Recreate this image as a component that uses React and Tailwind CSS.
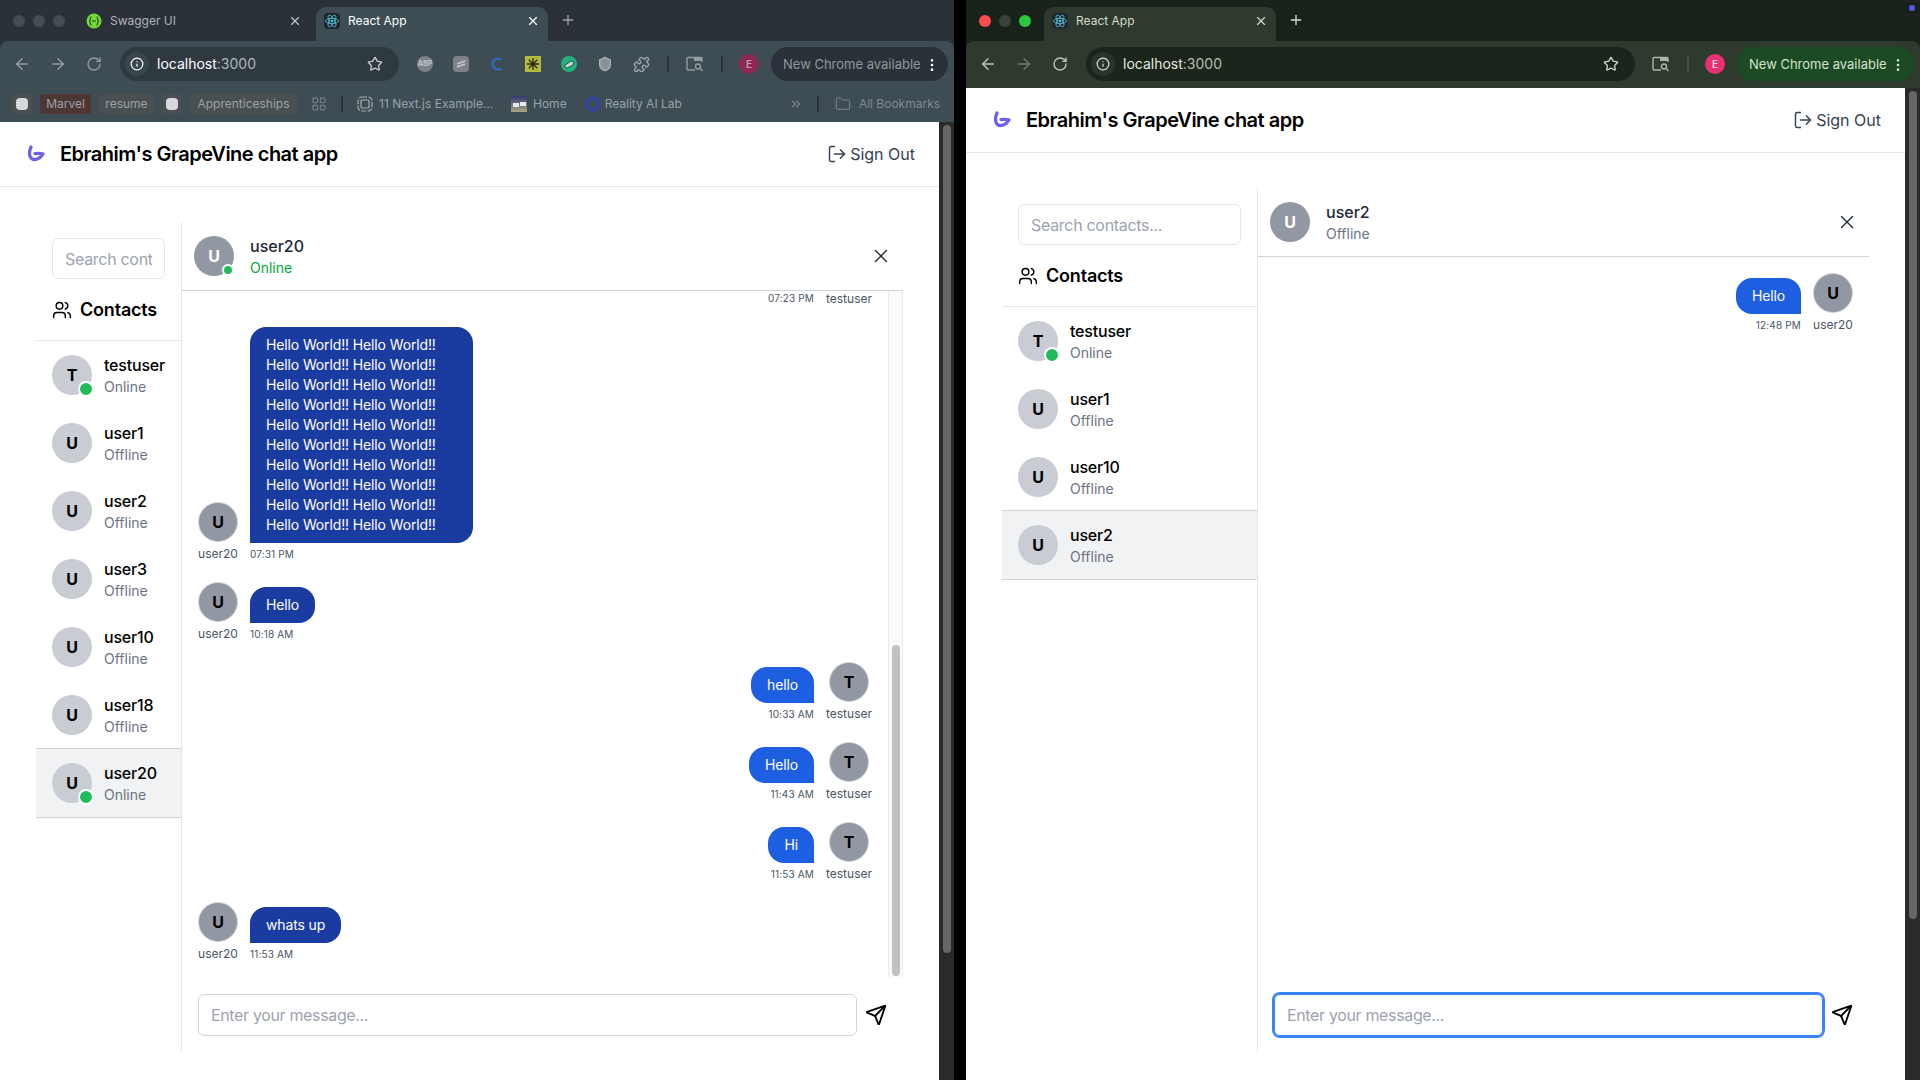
import React from 'react';
import { ArrowLeft, ArrowRight, RotateCw, Info, Star, Puzzle, Shield, Folder, LayoutGrid, EllipsisVertical, X, Plus, ChevronsRight, Users, LogOut, Send } from 'lucide-react';

const leftContacts = [
  { name: 'testuser', initial: 'T', online: true },
  { name: 'user1', initial: 'U' },
  { name: 'user2', initial: 'U' },
  { name: 'user3', initial: 'U' },
  { name: 'user10', initial: 'U' },
  { name: 'user18', initial: 'U' },
  { name: 'user20', initial: 'U', online: true, selected: true },
];

const rightContacts = [
  { name: 'testuser', initial: 'T', online: true },
  { name: 'user1', initial: 'U' },
  { name: 'user10', initial: 'U' },
  { name: 'user2', initial: 'U', selected: true },
];

// first row is scrolled off, only its footer still shows
const leftMessages = [
  { mine: true, who: 'testuser', time: '07:23 PM', footerOnly: true },
  { who: 'user20', text: 'Hello World!! '.repeat(20).trim(), time: '07:31 PM', wide: true },
  { who: 'user20', text: 'Hello', time: '10:18 AM' },
  { mine: true, who: 'testuser', text: 'hello', time: '10:33 AM' },
  { mine: true, who: 'testuser', text: 'Hello', time: '11:43 AM' },
  { mine: true, who: 'testuser', text: 'Hi', time: '11:53 AM' },
  { who: 'user20', text: 'whats up', time: '11:53 AM' },
];

const rightMessages = [
  { mine: true, who: 'user20', text: 'Hello', time: '12:48 PM' },
];

function ReactIcon() {
  return (
    <svg width="16" height="16" viewBox="0 0 16 16" className="shrink-0 rounded-sm bg-[#20262b]">
      <g fill="none" stroke="#58c4dc" strokeWidth="0.8">
        <ellipse cx="8" cy="8" rx="6.5" ry="2.6" />
        <ellipse cx="8" cy="8" rx="6.5" ry="2.6" transform="rotate(60 8 8)" />
        <ellipse cx="8" cy="8" rx="6.5" ry="2.6" transform="rotate(120 8 8)" />
      </g>
      <circle cx="8" cy="8" r="1.3" fill="#58c4dc" />
    </svg>
  );
}

function SwaggerIcon() {
  return (
    <svg width="16" height="16" viewBox="0 0 16 16" className="shrink-0">
      <circle cx="8" cy="8" r="7.5" fill="#6fdc36" />
      <path d="M5.5 3.8C4 3.8 4.6 6.8 3.6 8c1 1.200.4 4.200 1.900 4.200M10.500 3.800C12 3.800 11.400 6.800 12.400 8c-1 1.200-.4 4.200-1.900 4.200M6 8h4" fill="none" stroke="#2a3a20" strokeWidth="1.100" />
    </svg>
  );
}

function WindowSearchIcon({ color }) {
  return (
    <svg width="18" height="16" viewBox="0 0 18 16" fill="none" stroke={color} strokeWidth="1.400">
      <path d="M9 14H2a1 1 0 0 1-1-1V2.500a1 1 0 0 1 1-1h13a1 1 0 0 1 1 1V6" />
      <path d="M8 1.500h8V5H8z" fill={color} stroke="none" />
      <circle cx="12" cy="10.500" r="2.500" />
      <path d="m14 12.500 2.500 2.500" />
    </svg>
  );
}

function Logo() {
  return (
    <svg width="19" height="19" viewBox="0 0 19 19" fill="none" className="shrink-0">
      <path d="M4 2C2.500 5.500 1.800 9 3.300 12c2 3.800 8.700 3.800 12.700-3.200-2.800-.6-5-.7-8-.2" stroke="#6c5ff0" strokeWidth="3.200" strokeLinecap="round" strokeLinejoin="round" />
    </svg>
  );
}

function Extensions() {
  return (
    <>
      <Slot>
        <span className="flex size-4 items-center justify-center rounded-full bg-[#7c8388] text-[7px] font-bold text-[#c4c8ca]">ABP</span>
      </Slot>
      <Slot>
        <svg width="16" height="16" viewBox="0 0 16 16" className="rounded-sm bg-[#7c8388]">
          <path d="M4 8l8-3M4 11l8-3" stroke="#c4c8ca" strokeWidth="1.800" />
        </svg>
      </Slot>
      <Slot>
        <svg width="16" height="16" viewBox="0 0 16 16" fill="none">
          <path d="M12.500 3.500A5.500 5.500 0 1 0 12.500 12.500" stroke="#2f6bc0" strokeWidth="2.200" />
        </svg>
      </Slot>
      <Slot>
        <svg width="16" height="16" viewBox="0 0 16 16" className="bg-[#b4ba3c]">
          <path d="M8 2v12M2 8h12M3.800 3.800l8.400 8.400M12.200 3.800l-8.400 8.400" stroke="#2a2c18" strokeWidth="1.300" />
        </svg>
      </Slot>
      <Slot>
        <svg width="16" height="16" viewBox="0 0 16 16">
          <circle cx="8" cy="8" r="8" fill="#22b07d" />
          <path d="M3 10l7-5 3 1-1 3-6 3z" fill="#c9d6d2" stroke="#1d3a30" strokeWidth="0.800" />
        </svg>
      </Slot>
      <Slot><Shield size={16} className="fill-[#8a9195] text-[#aab0b3]" /></Slot>
      <Slot><Puzzle size={17} className="text-[#9aa3a8]" /></Slot>
      <Separator color="bg-[#2a343a]" />
    </>
  );
}

function Slot({ children }) {
  return <div className="flex w-9 shrink-0 items-center justify-center">{children}</div>;
}

function Separator({ color }) {
  return (
    <div className="flex w-[18px] shrink-0 justify-center">
      <div className={`h-4 w-0.5 ${color}`}></div>
    </div>
  );
}

function LeftTabs() {
  return (
    <>
      <div className="flex h-[34px] w-[232px] shrink-0 items-center pb-1.5 pl-2 text-xs text-[#aeb4b8]">
        <SwaggerIcon />
        <span className="ml-2 flex-1">Swagger UI</span>
        <X size={14} className="mr-2 text-[#c0c4c7]" />
      </div>
      <div className="ml-1.5 flex h-[34px] w-[232px] shrink-0 items-center rounded-t-[10px] bg-[#3e4c54] pb-1.5 pl-2 text-xs text-white">
        <ReactIcon />
        <span className="ml-2 flex-1">React App</span>
        <X size={14} className="mr-2 text-white" />
      </div>
      <Plus size={16} className="mb-[13px] ml-3 text-[#9aa3a8]" />
    </>
  );
}

function RightTabs() {
  return (
    <>
      <div className="flex h-[34px] w-[232px] shrink-0 items-center rounded-t-[10px] bg-[#2f3a2f] pb-1.5 pl-2 text-xs text-[#d3dacd]">
        <ReactIcon />
        <span className="ml-2 flex-1">React App</span>
        <X size={14} className="mr-2 text-[#d3dacd]" />
      </div>
      <Plus size={16} className="mb-[13px] ml-3 text-[#d3dacd]" />
    </>
  );
}

function Bookmarks() {
  return (
    <div className="flex h-[34px] items-start bg-[#3e4c54] pl-3 pt-1.5 text-xs text-[#98a3a9]">
      <div className="flex size-5 items-center justify-center rounded bg-[#4a4f52]"><div className="size-3 rounded-sm bg-[#d6d8da]"></div></div>
      <div className="ml-2 flex h-5 w-[51px] items-center justify-center rounded bg-[#503535]">Marvel</div>
      <div className="ml-2 flex h-5 w-[55px] items-center justify-center rounded bg-[#4a4f52]">resume</div>
      <div className="ml-2 flex size-5 items-center justify-center rounded bg-[#4a4f52]"><div className="size-3 rounded-sm bg-[#d6d8da]"></div></div>
      <div className="ml-2 flex h-5 w-[107px] items-center justify-center rounded bg-[#4a4f52]">Apprenticeships</div>
      <LayoutGrid size={16} strokeWidth={1.500} className="ml-3.5 mt-0.5 text-[#7f8a90]" />
      <div className="ml-3.5 mt-0.5 h-4 w-0.5 bg-[#2a343a]"></div>
      <svg width="16" height="16" viewBox="0 0 16 16" fill="none" stroke="#a8b0b4" strokeWidth="1.200" className="ml-3.5 mt-0.5 shrink-0">
        <rect x="1" y="1" width="14" height="14" rx="4" strokeDasharray="5 1.500" />
        <rect x="4" y="4" width="8" height="8" rx="1" />
      </svg>
      <span className="ml-1.5 mt-0.5 w-[114px] whitespace-nowrap">11 Next.js Example...</span>
      <div className="ml-[18px] mt-0.5 flex size-4 items-center justify-center gap-px bg-gradient-to-b from-[#34386e] to-[#a9a77e]">
        <div className="mt-0.5 h-1 w-1.5 bg-[#e7e8ee]"></div>
        <div className="h-1 w-1.5 bg-[#e7e8ee]"></div>
      </div>
      <span className="ml-1.5 mt-0.5">Home</span>
      <svg width="16" height="16" viewBox="0 0 16 16" fill="none" stroke="#3040b8" strokeWidth="2.500" className="ml-[18px] mt-0.5 shrink-0">
        <path d="M8 1.500l5.500 3v7L8 14.500l-5.500-3v-7z" />
      </svg>
      <span className="ml-1 mt-0.5 whitespace-nowrap">Reality AI Lab</span>
      <ChevronsRight size={14} className="ml-[107px] mt-[3px] text-[#7f8a90]" />
      <div className="ml-3.5 mt-0.5 h-4 w-0.5 bg-[#2a343a]"></div>
      <Folder size={16} strokeWidth={1.400} className="ml-4 mt-0.5 text-[#7f8a90]" />
      <span className="ml-2 mt-0.5 whitespace-nowrap text-[#7f8a90]">All Bookmarks</span>
    </div>
  );
}

function ChromeBar({ focused }) {
  const light = focused ? 'size-3 rounded-full bg-[#3a423b]' : 'size-3 rounded-full bg-[#454d55]';
  const icon = focused ? 'text-[#bcc8b6]' : 'text-[#929ca1]';
  const faded = focused ? 'text-[#6e7a6a]' : 'text-[#929ca1]';
  return (
    <div className={`shrink-0 ${focused ? 'bg-[#18211a]' : 'bg-[#2a3138]'}`}>
      <div className="flex h-[41px] items-end">
        <div className="flex h-full w-[78px] shrink-0 items-center gap-2 pl-[13px]">
          <div className={focused ? 'size-3 rounded-full bg-[#fb4f4f]' : light}></div>
          <div className={light}></div>
          <div className={focused ? 'size-3 rounded-full bg-[#28c840]' : light}></div>
        </div>
        {focused ? <RightTabs /> : <LeftTabs />}
      </div>
      <div className={`flex h-[47px] items-center rounded-t-lg pb-px pl-1 ${focused ? 'bg-[#2f3a2f]' : 'bg-[#3e4c54]'}`}>
        <Slot><ArrowLeft size={18} className={icon} /></Slot>
        <Slot><ArrowRight size={18} className={faded} /></Slot>
        <Slot><RotateCw size={16} className={icon} /></Slot>
        <div className={`ml-2 flex h-[34px] items-center rounded-full pl-[5px] pr-4 ${focused ? 'w-[549px] bg-[#1c251b]' : 'w-[279px] bg-[#2f3a40]'}`}>
          <div className={`flex size-6 shrink-0 items-center justify-center rounded-full ${focused ? 'bg-[#2a342a]' : 'bg-[#3a464d]'}`}>
            <Info size={14} className={focused ? 'text-[#dfe5da]' : 'text-white'} />
          </div>
          <span className={`ml-2 flex-1 text-sm ${focused ? 'text-[#e4e9e0]' : 'text-white'}`}>
            localhost<span className={focused ? 'text-[#b3bdad]' : 'text-[#aeb6ba]'}>:3000</span>
          </span>
          <Star size={16} className={focused ? 'text-[#cdd5c8]' : 'text-[#c4c9cc]'} />
        </div>
        <div className="ml-2 flex items-center">
          {!focused && <Extensions />}
          <Slot><WindowSearchIcon color={focused ? '#a9b8a2' : '#929ca1'} /></Slot>
          <Separator color={focused ? 'bg-[#445243]' : 'bg-[#2a343a]'} />
          <Slot>
            <div className={`flex size-5 items-center justify-center rounded-full text-[10px] font-semibold ${focused ? 'bg-[#e9316f] text-[#ffd9e6]' : 'bg-[#8d2a54] text-[#c9a0b2]'}`}>E</div>
          </Slot>
        </div>
        <div className={`ml-1 flex h-[34px] w-[177px] shrink-0 items-center rounded-full pl-3 pt-px text-[13px] ${focused ? 'bg-[#1c4a22] text-[#d3e3cd]' : 'bg-[#2a3138] text-[#8f989d]'}`}>
          <span className="flex-1 whitespace-nowrap">New Chrome available</span>
          <EllipsisVertical size={16} className={`mr-2 shrink-0 ${focused ? 'text-[#d3e3cd]' : 'text-white'}`} />
        </div>
      </div>
      {!focused && <Bookmarks />}
    </div>
  );
}

function ContactAvatar({ contact }) {
  return (
    <div className="relative flex size-10 shrink-0 items-center justify-center rounded-full bg-[#c9ccd3] font-bold text-black">
      {contact.initial}
      {contact.online && (
        <span className="absolute -bottom-0.5 -right-0.5 box-content size-3 rounded-full border-2 border-white bg-[#22bb5c]"></span>
      )}
    </div>
  );
}

function Sidebar({ contacts, width }) {
  return (
    <aside className={`flex shrink-0 flex-col border-r border-[#e5e7eb] ${width}`}>
      <div className="border-b border-[#e5e7eb] p-4">
        <input readOnly placeholder="Search contacts..." className="h-[41px] w-full min-w-0 rounded-md border border-[#e5e7eb] px-3 text-base tracking-[-0.3px] outline-none placeholder:text-[#9ca3af]" />
        <div className="mt-[17px] flex h-7 items-center gap-2">
          <Users size={20} strokeWidth={1.750} className="shrink-0 text-black" />
          <span className="text-lg font-semibold tracking-[-0.2px] text-black">Contacts</span>
        </div>
      </div>
      {contacts.map((contact) => (
        <div key={contact.name} className={`flex items-center gap-3 px-4 py-3 ${contact.selected ? 'bg-[#f1f2f4] shadow-[0_1px_0_#d1d5db,0_-1px_0_#d1d5db]' : ''}`}>
          <ContactAvatar contact={contact} />
          <div className="min-w-0">
            <div className="font-medium tracking-[-0.2px] whitespace-nowrap text-black">{contact.name}</div>
            <div className="text-sm text-gray-500">{contact.online ? 'Online' : 'Offline'}</div>
          </div>
        </div>
      ))}
    </aside>
  );
}

function Message({ message }) {
  if (message.footerOnly) {
    return (
      <div className="flex shrink-0 justify-end gap-3 leading-[14px] text-gray-600">
        <div className="text-[10px] tracking-[0.15px]">{message.time}</div>
        <div className="text-xs">{message.who}</div>
      </div>
    );
  }
  const avatar = (
    <div className="flex shrink-0 flex-col items-center">
      <div className="flex size-10 items-center justify-center rounded-full border border-[#d1d5db] bg-[#9198a3] font-bold text-black">
        {message.mine && message.who === 'testuser' ? 'T' : 'U'}
      </div>
      <div className="mt-1 text-xs leading-4 whitespace-nowrap text-gray-600">{message.who}</div>
    </div>
  );
  const bubble = (
    <div className={`flex flex-col ${message.mine ? 'items-end' : 'items-start'}`}>
      <div className={`rounded-2xl px-4 py-2 text-sm tracking-[-0.13px] text-white ${message.mine ? 'rounded-br-none bg-[#1d5fe0]' : 'rounded-bl-none bg-[#1a3b9f]'} ${message.wide ? 'w-[223px]' : ''}`}>
        {message.text}
      </div>
      <div className="mt-[3px] text-[10px] leading-4 tracking-[0.15px] text-gray-600">{message.time}</div>
    </div>
  );
  return (
    <div className={`flex shrink-0 items-end gap-3 ${message.mine ? 'justify-end' : 'justify-start'}`}>
      {message.mine ? bubble : avatar}
      {message.mine ? avatar : bubble}
    </div>
  );
}

function ChatPanel({ peer, online, messages, scrolled, focusedInput }) {
  return (
    <section className="flex min-w-0 flex-1 flex-col">
      <div className="flex items-center gap-4 border-b border-[#d1d5db] px-3 py-3">
        <div className="relative flex size-10 shrink-0 items-center justify-center rounded-full bg-[#9198a3] font-bold text-white">
          U
          {online && <span className="absolute bottom-0 right-0 box-content size-2 rounded-full border-2 border-white bg-[#22bb5c]"></span>}
        </div>
        <div className="flex-1">
          <div className="font-medium text-gray-800">{peer}</div>
          <div className={`text-sm ${online ? 'text-green-600' : 'text-gray-500'}`}>{online ? 'Online' : 'Offline'}</div>
        </div>
        <X size={22} strokeWidth={1.500} className="-mr-px text-gray-800" />
      </div>
      <div className="flex min-h-0 flex-1">
        <div className={`flex min-w-0 flex-1 flex-col gap-5 overflow-hidden pl-4 pr-4 ${scrolled ? 'justify-end pb-4' : 'justify-start pt-4'}`}>
          {messages.map((message, index) => (
            <Message key={index} message={message} />
          ))}
        </div>
        {scrolled && (
          <div className="flex w-[15px] shrink-0 flex-col items-center justify-end border-x border-[#ececec] bg-[#fafafa] pb-0.5">
            <div className="h-[331px] w-2 rounded-full bg-[#c1c1c1]"></div>
          </div>
        )}
      </div>
      <div className="flex items-center gap-2 p-4">
        <input
          readOnly
          placeholder="Enter your message..."
          className={`h-[42px] min-w-0 flex-1 rounded-md px-3 text-base tracking-[-0.35px] outline-none placeholder:text-[#9ca3af] ${focusedInput ? 'border border-[#3b82f6] ring-2 ring-[#3b82f6]' : 'border border-[#d1d5db]'}`}
        />
        <Send size={22} className="shrink-0 text-black" />
      </div>
    </section>
  );
}

function BrowserWindow({ focused, contacts, sidebarWidth, peer, online, messages, scrolled }) {
  return (
    <div className="relative flex h-full w-[954px] shrink-0 flex-col">
      <ChromeBar focused={focused} />
      <div className="flex min-h-0 flex-1">
        <div className="flex w-[939px] shrink-0 flex-col bg-white">
          <header className="flex h-[65px] shrink-0 items-center justify-between border-b border-[#e5e7eb] px-6">
            <div className="flex items-center gap-[14px] pl-[3px]">
              <Logo />
              <h1 className="text-xl font-semibold tracking-[-0.5px] text-black">Ebrahim's GrapeVine chat app</h1>
            </div>
            <div className="flex items-center gap-1 text-gray-700">
              <LogOut size={20} strokeWidth={1.750} className="translate-x-px" />
              <span>Sign Out</span>
            </div>
          </header>
          <main className="flex min-h-0 flex-1 px-9 pb-7 pt-[35px]">
            <Sidebar contacts={contacts} width={sidebarWidth} />
            <ChatPanel peer={peer} online={online} messages={messages} scrolled={scrolled} focusedInput={focused} />
          </main>
        </div>
        <div className="w-[15px] shrink-0 bg-[#2a2a2a] px-1 pt-[3px]">
          <div className="h-[828px] w-2 rounded-full bg-[#666666]"></div>
        </div>
      </div>
      {focused && <span className="absolute right-[5px] top-[5px] size-1.5 rounded-full bg-[#5558e8]"></span>}
    </div>
  );
}

export default function App() {
  return (
    <div className="flex h-screen w-full gap-3 overflow-hidden bg-black font-['Inter',sans-serif]">
      <BrowserWindow contacts={leftContacts} sidebarWidth="w-[146px]" peer="user20" online messages={leftMessages} scrolled />
      <BrowserWindow focused contacts={rightContacts} sidebarWidth="w-64" peer="user2" messages={rightMessages} />
    </div>
  );
}
